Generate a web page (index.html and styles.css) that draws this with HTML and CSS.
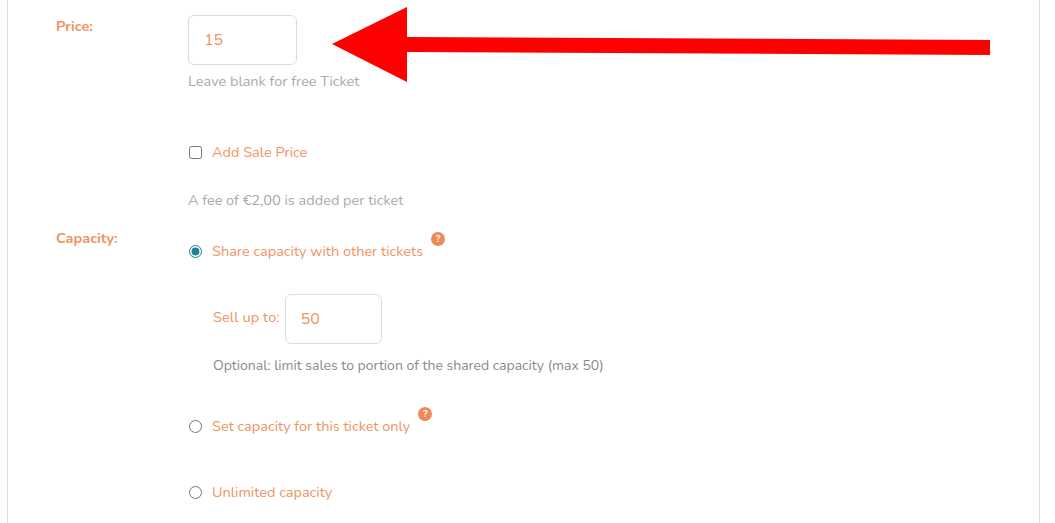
FILE: index.html
```html
<!DOCTYPE html>
<html lang="en">
<head>
  <meta charset="UTF-8">
  <meta name="viewport" content="width=device-width, initial-scale=1.0">
  <title>Ticket Settings</title>
  <link rel="stylesheet" href="styles.css">
</head>

<body>

  <div class="panel">
    <div class="field-row price-row">
      <label class="field-label" for="price">Price:</label>
      <div class="field-body">
        <input type="text" id="price" class="text-input" value="15">
        <p class="hint">Leave blank for free Ticket</p>
        <label class="option sale-option">
          <input type="checkbox">
          <span>Add Sale Price</span>
        </label>
        <p class="hint fee-hint">A fee of €2,00 is added per ticket</p>
      </div>
    </div>

    <div class="field-row capacity-row">
      <span class="field-label">Capacity:</span>
      <div class="field-body">
        <label class="option share-option">
          <input type="radio" name="capacity" checked>
          <span>Share capacity with other tickets</span>
          <span class="help-icon">?</span>
        </label>

        <div class="sell-limit">
          <div class="sell-line">
            <label for="sellUpTo">Sell up to:</label>
            <input type="text" id="sellUpTo" class="text-input small-input" value="50">
          </div>
          <p class="hint optional-hint">Optional: limit sales to portion of the shared capacity (max 50)</p>
        </div>

        <label class="option single-option">
          <input type="radio" name="capacity">
          <span>Set capacity for this ticket only</span>
          <span class="help-icon">?</span>
        </label>

        <label class="option unlimited-option">
          <input type="radio" name="capacity">
          <span>Unlimited capacity</span>
        </label>
      </div>
    </div>
  </div>

  <!-- Annotation arrow pasted over the form -->
  <svg class="arrow" width="1055" height="100" viewBox="0 0 1055 100">
    <polygon points="332,44 407,7 407,37 990,40 990,55 407,52 407,82" fill="#ff0000"/>
  </svg>

</body>

</html>
```

FILE: styles.css
```css
/* General Styles */
html, body {
  height: 100%;
  overflow: hidden;
}

body {
  font-family: "Nunito", "Lato", "Open Sans", sans-serif;
  font-size: 14.5px;
  color: #f0935f;
  background-color: #fff;
  margin: 0;
  padding: 0;
}

p {
  margin: 0;
}

/* Panel */
.panel {
  box-sizing: border-box;
  width: 1033px;
  height: 523px;
  margin-left: 7px;
  padding: 15px 0 0 48px;
  border-left: 1px solid #ddd;
  border-right: 1px solid #ddd;
}

.field-row {
  display: flex;
}

.field-label {
  width: 132px;
  flex-shrink: 0;
  font-weight: 700;
  line-height: 22px;
}

.capacity-row {
  margin-top: 17px;
}

/* Inputs */
.text-input {
  display: block;
  box-sizing: border-box;
  width: 109px;
  height: 50px;
  padding: 0 15px;
  border: 1px solid #ddd;
  border-radius: 6px;
  font-family: inherit;
  font-size: 16px;
  color: #f0935f;
  background-color: #fff;
}

.small-input {
  width: 97px;
}

.hint {
  color: #a9a9a9;
  line-height: 20px;
}

.option {
  display: flex;
  align-items: center;
  position: relative;
  line-height: 20px;
}

.option input {
  margin: 0 10px 0 1px;
  accent-color: #1f7f95;
}

/* Price */
.price-row .hint {
  margin-top: 6px;
}

.sale-option {
  margin-top: 51px;
}

.price-row .fee-hint {
  margin-top: 28px;
}

/* Capacity */
.share-option {
  margin-top: 14px;
}

.help-icon {
  width: 14px;
  height: 14px;
  margin: -25px 0 0 8px;
  border-radius: 50%;
  background-color: #ee8a58;
  color: #fff;
  font-size: 10px;
  font-weight: 700;
  line-height: 14px;
  text-align: center;
}

.sell-limit {
  margin: 33px 0 0 25px;
}

.sell-line {
  display: flex;
  align-items: center;
  gap: 5px;
}

.sell-line label {
  padding-bottom: 4px;
  letter-spacing: 0.1px;
}

.optional-hint {
  margin-top: 12px;
  font-size: 14px;
  color: #8a8a8a;
}

.single-option {
  margin-top: 40px;
}

.unlimited-option {
  margin-top: 46px;
}

/* Annotation */
.arrow {
  position: absolute;
  top: 0;
  left: 0;
}
```
